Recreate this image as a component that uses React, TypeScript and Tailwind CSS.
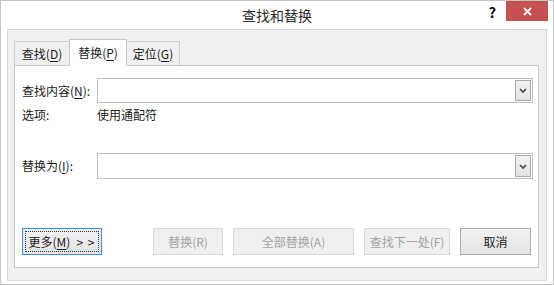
import React from "react";

const font = { fontFamily: '"Noto Sans CJK SC", "Noto Sans", sans-serif' };

function Key({ k }: { k: string }) {
  return <span className="underline underline-offset-2">{k}</span>;
}

function Chevron() {
  return (
    <svg width="8" height="5" viewBox="0 0 8 5" className="block">
      <path d="M1 1 L4 4 L7 1" fill="none" stroke="#404040" strokeWidth="1.6" />
    </svg>
  );
}

function ComboBox() {
  return (
    <div className="flex h-full flex-1 items-stretch border border-[#c0c0c0] bg-white p-px">
      <div className="flex-1" />
      <div className="flex w-[16px] items-center justify-center border border-[#acacac] bg-gradient-to-b from-[#f2f2f2] to-[#e3e3e3]">
        <Chevron />
      </div>
    </div>
  );
}

function Tab({
  label,
  k,
  active,
  className,
}: {
  label: string;
  k: string;
  active?: boolean;
  className: string;
}) {
  return (
    <div
      className={
        active
          ? `relative z-10 -mb-px flex h-[27px] items-center justify-center border border-b-0 border-[#c7c7c7] bg-white pb-px text-[12px] text-[#1a1a1a] ${className}`
          : `flex h-[24px] items-center justify-center border border-b-0 border-[#cfcfcf] bg-[#f0f0f0] text-[12px] text-[#1a1a1a] ${className}`
      }
    >
      {label}(<Key k={k} />)
    </div>
  );
}

function Button({
  children,
  disabled,
  className,
}: {
  children: React.ReactNode;
  disabled?: boolean;
  className: string;
}) {
  return (
    <div
      className={
        disabled
          ? `flex h-[27px] items-center justify-center border border-[#dadada] bg-[#efefef] text-[12px] text-[#a3a3a3] ${className}`
          : `flex h-[27px] items-center justify-center border border-[#acacac] bg-gradient-to-b from-[#f1f1f1] to-[#e4e4e4] text-[12px] text-[#1a1a1a] ${className}`
      }
    >
      {children}
    </div>
  );
}

export default function App() {
  return (
    <div
      className="flex h-[285px] w-[554px] flex-col border border-[#c6c6c6] bg-white"
      style={font}
    >
      {/* title bar */}
      <div className="grid h-[28px] grid-cols-[1fr_auto_1fr]">
        <div />
        <div className="flex items-center pt-px text-[14px] text-[#2b2b2b]">查找和替换</div>
        <div className="flex items-start justify-end pr-[5px]">
          <span className="mr-[10px] mt-[2px] text-[14px] font-bold leading-[18px] text-black">?</span>
          <div className="flex h-[20px] w-[42px] items-center justify-center bg-[#c75050]">
            <svg width="9" height="9" viewBox="0 0 9 9">
              <path d="M1 1 L8 8 M8 1 L1 8" stroke="#fff" strokeWidth="1.8" />
            </svg>
          </div>
        </div>
      </div>

      {/* client area */}
      <div className="mx-[6px] flex h-[252px] flex-col border border-[#d9d9d9] bg-[#f0f0f0] pb-[12px] pl-[6px] pr-[7px] pt-[8px]">
        <div className="flex h-[27px] items-end">
          <Tab label="查找" k="D" className="w-[56px]" />
          <Tab label="替换" k="P" active className="-ml-px w-[58px]" />
          <Tab label="定位" k="G" className="-ml-px w-[54px]" />
        </div>

        <div className="flex flex-1 flex-col border border-[#c7c7c7] bg-white pb-[12px] pl-[7px] pr-[5px] pt-[12px] text-[12px] text-[#1a1a1a]">
          <div className="flex h-[25px] items-center">
            <div className="w-[75px]">
              查找内容(<Key k="N" />):
            </div>
            <ComboBox />
          </div>
          <div className="mt-[3px] flex h-[18px] items-center">
            <div className="w-[75px]">选项:</div>
            <div>使用通配符</div>
          </div>
          <div className="mt-[29px] flex h-[26px] items-center">
            <div className="w-[75px]">
              替换为(<Key k="I" />):
            </div>
            <ComboBox />
          </div>

          <div className="mt-auto flex items-center justify-between pr-[2px]">
            <div className="flex h-[27px] w-[80px] items-center justify-center border border-[#3c8fe0] bg-gradient-to-b from-[#f1f1f1] to-[#e4e4e4] p-[2px]">
              <div className="flex h-full w-full items-center justify-center border border-dotted border-[#333]">
                更多(<Key k="M" />)<span className="ml-[6px] tracking-[1px]">&gt; &gt;</span>
              </div>
            </div>
            <div className="flex gap-[10px]">
              <Button disabled className="w-[70px]">替换(R)</Button>
              <Button disabled className="w-[121px]">全部替换(A)</Button>
              <Button disabled className="w-[86px]">查找下一处(F)</Button>
              <Button className="w-[71px]">取消</Button>
            </div>
          </div>
        </div>
      </div>
    </div>
  );
}
